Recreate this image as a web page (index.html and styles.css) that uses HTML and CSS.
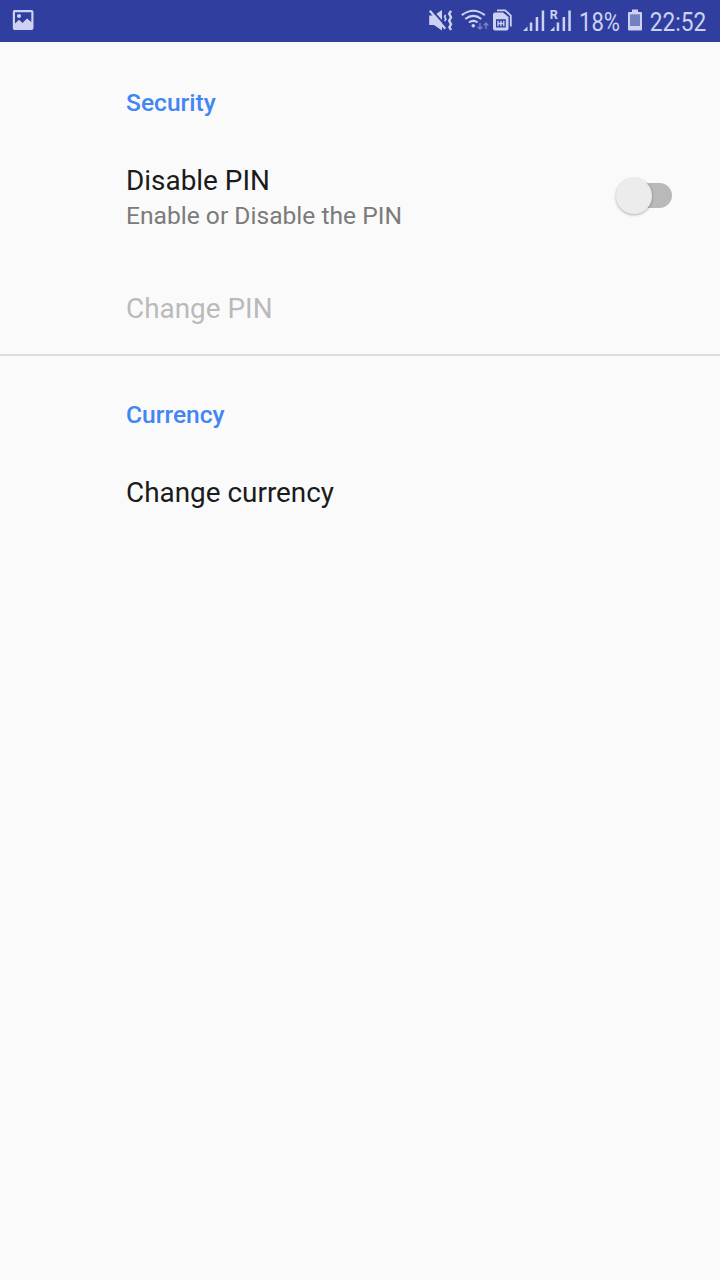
FILE: index.html
```html
<!DOCTYPE html>
<html lang="en">
<head>
<meta charset="utf-8">
<title>Settings</title>
<link rel="stylesheet" href="styles.css">
</head>
<body>
<header class="status">
  <svg class="picture" width="22" height="20" viewBox="0 0 22 20"><path fill-rule="evenodd" d="M2.5 0H19.5Q21.5 0 21.5 2V18Q21.5 20 19.5 20H2.5Q.8 20 .8 18V2Q.8 0 2.5 0ZM3 2.3V13.5L7 9.8 10.5 13 15 8.5 19.3 12V2.3Z"/><circle cx="7" cy="6" r="2.1"/></svg>
  <div class="indicators">
    <svg width="24" height="24" viewBox="429 9 24 24">
      <path d="M429.2 15.5H434L442 10V30.5L434 25H429.2Z"/>
      <path class="slash" d="M431 9.2L447 27.2"/>
      <path class="line" stroke-width="2.2" d="M429.8 10.8L445.3 28.8"/>
      <path class="line" stroke-width="1.7" d="M445.6 14.8L444.6 16.8 445.8 19 444.8 21.2"/>
      <path class="line" stroke-width="2.4" d="M451 10.8L449.2 13.7 451 17.2 449.2 20.7 451 24.2 449.4 27.2 451 30"/>
    </svg>
    <svg class="wifi" width="28" height="22" viewBox="461 9 28 22">
      <path class="line" stroke-width="2.1" d="M461.8 15.2Q473.3 6.3 484.8 15.2M465.3 19Q473.3 12.6 481.3 19M469 22.5Q473.3 19.3 477.6 22.5"/>
      <circle cx="473.3" cy="25.7" r="1.8"/>
      <path class="faint" d="M480 23V28.8M477.7 26.7L480 29.1 482.3 26.7M486 29V23.3M483.7 25.4L486 23 488.3 25.4"/>
    </svg>
    <svg class="sim" width="20" height="22" viewBox="492 9 20 22">
      <path class="line" stroke-width="1.8" d="M497 10.3H505.2L510.8 15.6V26.5"/>
      <path fill-rule="evenodd" d="M495 12.5H503L508.5 17V28.5Q508.5 30.5 506.5 30.5H495Q493 30.5 493 28.5V14.5Q493 12.5 495 12.5ZM496 19.2V27.6H505.8V19.2Z"/>
      <path class="line" stroke-width="1.4" d="M498 20.8V26.2M500.9 20.8V26.2M503.8 20.8V26.2M498 23.5H503.8"/>
    </svg>
    <svg class="signal" width="22" height="22" viewBox="523 9 22 22"><path d="M523 31L527.5 26.5V31ZM529.8 22.5H532.3V31H529.8ZM535.7 17H538.2V31H535.7ZM541.7 10.5H544.2V31H541.7Z"/></svg>
    <svg class="roaming" width="22" height="22" viewBox="550 9 22 22"><path d="M550 31L554.5 26.5V31ZM556.7 22.5H559.2V31H556.7ZM562.6 17H565.1V31H562.6ZM568.3 10.5H570.8V31H568.3Z"/><text class="r-label" x="549.8" y="19.3">R</text></svg>
    <svg class="percent" width="43" height="32" viewBox="0 0 43 32"><text x="0" y="25" textLength="41" lengthAdjust="spacingAndGlyphs">18%</text></svg>
    <svg class="battery" width="14" height="22" viewBox="0 0 14 22"><path d="M4 .5H10V3H13Q14 3 14 4V20.5Q14 21.5 13 21.5H1Q0 21.5 0 20.5V4Q0 3 1 3H4Z"/><path class="empty" d="M2 5.3H12V17H2Z"/></svg>
    <svg class="clock" width="59" height="32" viewBox="0 0 59 32"><text x="-.3" y="25" textLength="56.5" lengthAdjust="spacingAndGlyphs">22:52</text></svg>
  </div>
</header>
<main>
  <section class="group">
    <h2 class="heading">Security</h2>
    <div class="row">
      <div class="label">
        <div class="title">Disable PIN</div>
        <div class="summary">Enable or Disable the PIN</div>
      </div>
      <div class="switch"><span class="thumb"></span></div>
    </div>
    <div class="title disabled">Change PIN</div>
  </section>
  <section class="group second">
    <h2 class="heading">Currency</h2>
    <div class="title change">Change currency</div>
  </section>
</main>
</body>
</html>
```
FILE: styles.css
```css
* { box-sizing: border-box; }
body { margin: 0; min-height: 1280px; background: #fafafa; font-family: Roboto, sans-serif; }
.status { display: flex; justify-content: space-between; height: 42px; padding: 0 11px 0 12px; background: #303f9f; }
.status svg { display: block; flex: none; fill: #cdd2f0; overflow: visible; }
.status .picture { margin-top: 10px; }
.indicators { display: flex; align-items: flex-start; padding-top: 9px; }
.status .line { fill: none; stroke: #cdd2f0; }
.status .slash { fill: none; stroke: #303f9f; stroke-width: 2; }
.status .faint { fill: none; stroke: #7782c6; stroke-width: 1.4; }
.status .empty { fill: #7380c4; }
.wifi { margin-left: 8px; }
.sim { margin-left: 3px; }
.signal { margin-left: 11px; }
.roaming { margin-left: 5px; }
.percent { margin-left: 7px; margin-top: -3px; font-size: 25px; }
.battery { margin-left: 6px; }
.clock { margin-left: 8px; margin-top: -3px; font-size: 25px; }
.r-label { font-size: 12.5px; font-weight: 700; }
.group { padding: 47px 48px 0 126px; }
.group:first-child { height: 314px; border-bottom: 2px solid #dcdcdc; }
.second { padding-top: 45px; }
.heading { margin: 0; font-size: 24.6px; font-weight: 500; line-height: 28px; color: #4285f4; }
.row { display: flex; justify-content: space-between; margin-top: 46px; }
.title { font-size: 27.9px; line-height: 36px; color: #1b1b1b; }
.summary { margin-bottom: 2px; font-size: 24.6px; line-height: 34px; color: #7b7b7b; }
.disabled { margin-top: 56px; color: #bababa; }
.change { margin-top: 46px; }
.switch { position: relative; width: 56px; height: 38px; margin-top: 15px; }
.switch::before { content: ""; position: absolute; left: 6px; right: 0; top: 5px; height: 25px; border-radius: 13px; background: #b9b9b9; }
.thumb { position: relative; display: block; width: 36px; height: 36px; border-radius: 50%; background: #ececec; box-shadow: 0 1px 3px rgba(0,0,0,.3); }
```
